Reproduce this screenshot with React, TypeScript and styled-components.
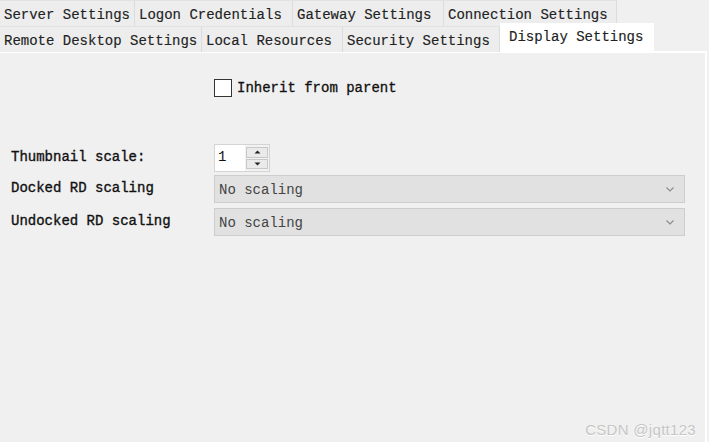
import React from "react";
import styled, { createGlobalStyle } from "styled-components";

const Global = createGlobalStyle`
  html, body { margin: 0; padding: 0; background: #f0f0f0; }
  body { font-family: "Liberation Mono", "DejaVu Sans Mono", monospace; font-size: 14px; color: #1b1b1b; }
  #root { width: 709px; height: 442px; overflow: hidden; }
`;

const Page = styled.div`
  position: relative;
  width: 709px;
  height: 442px;
  display: flex;
  flex-direction: column;
  background: #f0f0f0;
`;

const TabStrip = styled.div`
  display: flex;
  flex-direction: column;
  height: 51px;
`;

const TabRow = styled.div`
  display: flex;
  align-items: flex-end;
  height: 26px;
`;

const Tab = styled.div<{ $w: number; $active?: boolean }>`
  box-sizing: border-box;
  width: ${(p) => p.$w}px;
  height: ${(p) => (p.$active ? 29 : 26)}px;
  margin-top: ${(p) => (p.$active ? -3 : 0)}px;
  padding: ${(p) => (p.$active ? "5px 0 0 9px" : "6px 0 0 4px")};
  background: ${(p) => (p.$active ? "#ffffff" : "#ededed")};
  border-right: 1px solid ${(p) => (p.$active ? "#ffffff" : "#dcdcdc")};
  border-top: 1px solid ${(p) => (p.$active ? "#ffffff" : "#e2e2e2")};
  white-space: nowrap;
  line-height: 17px;
  color: #222;
  -webkit-text-stroke: 0.15px #222;
  position: relative;
  z-index: ${(p) => (p.$active ? 2 : 1)};
`;

const Panel = styled.div`
  flex: 1;
  width: 707px;
  box-sizing: border-box;
  border-top: 2px solid #ffffff;
  border-right: 2px solid #ffffff;
  background: #f0f0f0;
  padding-top: 26px;
  display: flex;
  flex-direction: column;
`;

const CheckRow = styled.label`
  display: flex;
  align-items: center;
  gap: 5px;
  margin-left: 214px;
  height: 18px;
  color: #111;
  -webkit-text-stroke: 0.3px #111;
`;

const Box = styled.span`
  box-sizing: border-box;
  width: 18px;
  height: 18px;
  border: 1px solid #333;
  background: #fff;
`;

const Form = styled.div`
  display: grid;
  grid-template-columns: 214px 470px;
  grid-template-rows: 31px 33px 33px;
  align-items: start;
  margin-top: 47px;
`;

const Label = styled.div`
  padding-left: 11px;
  display: flex;
  align-items: center;
  height: 26px;
  color: #111;
  font-size: 14px;
  -webkit-text-stroke: 0.35px #111;
`;

const Spin = styled.div`
  box-sizing: border-box;
  width: 56px;
  height: 28px;
  display: flex;
  border: 1px solid #d4d4d4;
  background: #f2f2f2;
`;

const SpinInput = styled.div`
  width: 31px;
  background: #fff;
  padding: 4px 0 0 3px;
  box-sizing: border-box;
  color: #111;
`;

const SpinButtons = styled.div`
  display: flex;
  flex-direction: column;
  gap: 1px;
  padding: 2px 1px 2px 1px;
`;

const SpinBtn = styled.div`
  box-sizing: border-box;
  width: 22px;
  height: 11px;
  border: 1px solid #c8c8c8;
  background: #eaeaea;
  display: flex;
  align-items: center;
  justify-content: center;
`;

const Combo = styled.div`
  box-sizing: border-box;
  width: 471px;
  height: 28px;
  border: 1px solid #cdcdcd;
  background: #e1e1e1;
  display: flex;
  align-items: center;
  justify-content: space-between;
  padding: 1px 10px 0 4px;
  color: #444;
`;

const Watermark = styled.div`
  position: absolute;
  right: 13px;
  bottom: 4px;
  font-family: "Liberation Sans", Arial, sans-serif;
  font-size: 15px;
  letter-spacing: 0.3px;
  color: #c6c6c6;
  text-shadow: 0 1px 0 #ffffff;
`;

const Arrow = ({ up }: { up?: boolean }) => (
  <svg width="7" height="4" viewBox="0 0 7 4">
    <path d={up ? "M0.5 3.5 L3.5 0.5 L6.5 3.5 Z" : "M0.5 0.5 L3.5 3.5 L6.5 0.5 Z"} fill="#222" />
  </svg>
);

const Chevron = () => (
  <svg width="8" height="5" viewBox="0 0 8 5">
    <path d="M0.5 0.5 L4 4 L7.5 0.5" fill="none" stroke="#8a8a8a" strokeWidth="1.1" />
  </svg>
);

export default function App() {
  return (
    <Page>
      <Global />
      <TabStrip>
        <TabRow>
          <Tab $w={135}>Server Settings</Tab>
          <Tab $w={158}>Logon Credentials</Tab>
          <Tab $w={151}>Gateway Settings</Tab>
          <Tab $w={173}>Connection Settings</Tab>
        </TabRow>
        <TabRow>
          <Tab $w={202}>Remote Desktop Settings</Tab>
          <Tab $w={141}>Local Resources</Tab>
          <Tab $w={157}>Security Settings</Tab>
          <Tab $w={154} $active>Display Settings</Tab>
        </TabRow>
      </TabStrip>
      <Panel>
        <CheckRow>
          <Box />
          <span>Inherit from parent</span>
        </CheckRow>
        <Form>
          <Label>Thumbnail scale:</Label>
          <div>
            <Spin>
              <SpinInput>1</SpinInput>
              <SpinButtons>
                <SpinBtn><Arrow up /></SpinBtn>
                <SpinBtn><Arrow /></SpinBtn>
              </SpinButtons>
            </Spin>
          </div>
          <Label>Docked RD scaling</Label>
          <Combo>
            <span>No scaling</span>
            <Chevron />
          </Combo>
          <Label>Undocked RD scaling</Label>
          <Combo>
            <span>No scaling</span>
            <Chevron />
          </Combo>
        </Form>
      </Panel>
      <Watermark>CSDN @jqtt123</Watermark>
    </Page>
  );
}
